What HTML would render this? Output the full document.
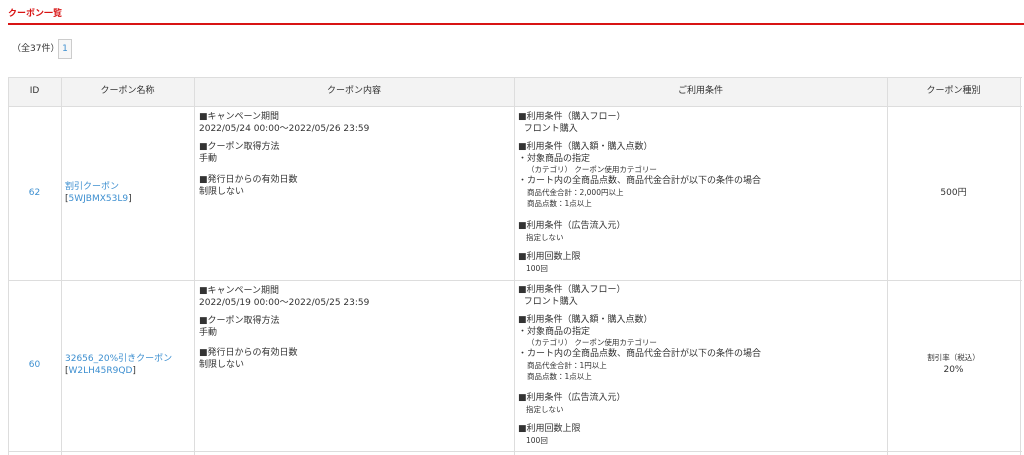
<!DOCTYPE html>
<html><head><meta charset="utf-8"><style>
body{margin:0;width:1024px;height:455px;overflow:hidden;background:#fff;font-family:"DejaVu Sans","Noto Sans CJK JP",sans-serif;color:#333;font-size:9px;position:relative}
.a{position:absolute;white-space:nowrap;line-height:12px}
.v{position:absolute;width:1px;background:#ddd}
.h{position:absolute;height:1px;background:#ddd;left:8px;width:1014px}
.s{font-size:7.5px}
.l{color:#3d8fd0}
.c{text-align:center}
</style></head><body>
<div class="a" style="left:8px;top:7px;color:#d81414;font-weight:bold;font-size:9px;font-family:'Noto Sans CJK JP',sans-serif">クーポン一覧</div>
<div style="position:absolute;left:8px;top:23px;width:1016px;height:2px;background:#d81414"></div>
<div class="a" style="left:12px;top:43px">（全37件）</div>
<div style="position:absolute;left:58px;top:39px;width:12px;height:18px;border:1px solid #ccc;background:#f7f7f7;color:#3d8fd0;text-align:center;line-height:18px;font-size:9px">1</div>

<div style="position:absolute;left:8px;top:77px;width:1013px;height:29px;background:#f3f3f3"></div>
<div class="h" style="top:77px"></div><div class="h" style="top:106px"></div><div class="h" style="top:280px"></div><div class="h" style="top:451px"></div>
<div class="v" style="left:8px;top:77px;height:378px"></div>
<div class="v" style="left:61px;top:77px;height:378px"></div>
<div class="v" style="left:194px;top:77px;height:378px"></div>
<div class="v" style="left:514px;top:77px;height:378px"></div>
<div class="v" style="left:887px;top:77px;height:378px"></div>
<div class="v" style="left:1020px;top:77px;height:378px"></div>

<div class="a c" style="left:8px;width:53px;top:85px">ID</div>
<div class="a c" style="left:61px;width:133px;top:85px">クーポン名称</div>
<div class="a c" style="left:194px;width:320px;top:85px">クーポン内容</div>
<div class="a c" style="left:514px;width:373px;top:85px">ご利用条件</div>
<div class="a c" style="left:887px;width:133px;top:85px">クーポン種別</div>

<!-- row 1 -->
<div class="a c l" style="left:8px;width:53px;top:187px">62</div>
<div class="a l" style="left:65px;top:181px">割引クーポン<br><span style="color:#333">[</span>5WJBMX53L9<span style="color:#333">]</span></div>
<div class="a" style="left:199px;top:111px">■キャンペーン期間<br>2022/05/24 00:00～2022/05/26 23:59</div>
<div class="a" style="left:199px;top:141px">■クーポン取得方法<br>手動</div>
<div class="a" style="left:199px;top:174px">■発行日からの有効日数<br>制限しない</div>
<div class="a" style="left:518px;top:111px">■利用条件（購入フロー）<br>&nbsp;&nbsp;フロント購入</div>
<div class="a" style="left:518px;top:141px">■利用条件（購入額・購入点数）<br>・対象商品の指定</div>
<div class="a s" style="left:527px;top:165px;line-height:10px">（カテゴリ） クーポン使用カテゴリー</div>
<div class="a" style="left:518px;top:175px">・カート内の全商品点数、商品代金合計が以下の条件の場合</div>
<div class="a s" style="left:527px;top:187px;line-height:11px">商品代金合計：2,000円以上<br>商品点数：1点以上</div>
<div class="a" style="left:518px;top:220px">■利用条件（広告流入元）</div>
<div class="a s" style="left:526px;top:232px">指定しない</div>
<div class="a" style="left:518px;top:251px">■利用回数上限</div>
<div class="a s" style="left:526px;top:263px">100回</div>
<div class="a c" style="left:887px;width:133px;top:187px">500円</div>

<!-- row 2 -->
<div class="a c l" style="left:8px;width:53px;top:359px">60</div>
<div class="a l" style="left:65px;top:353px">32656_20%引きクーポン<br><span style="color:#333">[</span>W2LH45R9QD<span style="color:#333">]</span></div>
<div class="a" style="left:199px;top:285px">■キャンペーン期間<br>2022/05/19 00:00～2022/05/25 23:59</div>
<div class="a" style="left:199px;top:315px">■クーポン取得方法<br>手動</div>
<div class="a" style="left:199px;top:347px">■発行日からの有効日数<br>制限しない</div>
<div class="a" style="left:518px;top:284px">■利用条件（購入フロー）<br>&nbsp;&nbsp;フロント購入</div>
<div class="a" style="left:518px;top:314px">■利用条件（購入額・購入点数）<br>・対象商品の指定</div>
<div class="a s" style="left:527px;top:338px;line-height:10px">（カテゴリ） クーポン使用カテゴリー</div>
<div class="a" style="left:518px;top:348px">・カート内の全商品点数、商品代金合計が以下の条件の場合</div>
<div class="a s" style="left:527px;top:360px;line-height:11px">商品代金合計：1円以上<br>商品点数：1点以上</div>
<div class="a" style="left:518px;top:392px">■利用条件（広告流入元）</div>
<div class="a s" style="left:526px;top:404px">指定しない</div>
<div class="a" style="left:518px;top:423px">■利用回数上限</div>
<div class="a s" style="left:526px;top:435px">100回</div>
<div class="a c s" style="left:887px;width:133px;top:352px">割引率（税込）</div>
<div class="a c" style="left:887px;width:133px;top:364px">20%</div>
</body></html>
